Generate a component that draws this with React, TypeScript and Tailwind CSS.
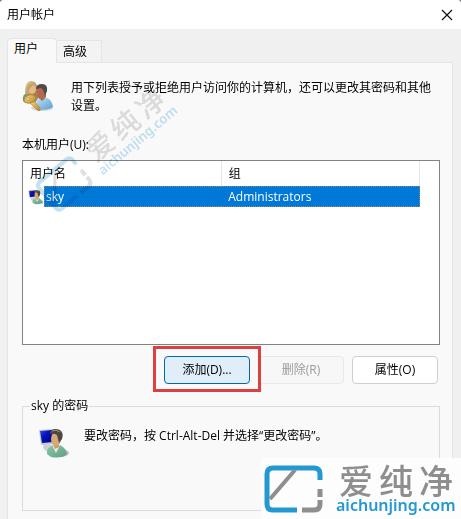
import { useState } from 'react';

function Brand({ className }: { className: string }) {
  return (
    <svg viewBox="0 0 197 58" className={`overflow-visible ${className}`} role="img" aria-label="aichunjing.com">
      <g fill="none" strokeWidth="5">
        <path d="M56 19V13Q56 7 50 7H9Q3 7 3 13V43Q3 49 9 49H33" stroke="#2498d2" />
        <path d="M6 38L31 9" stroke="#8e8e8e" strokeWidth="4" />
        <path d="M56 28V36M56 39V43Q56 49 50 49H38" stroke="#8e8e8e" />
      </g>
      <g className="font-['Noto_Sans_CJK_SC',sans-serif] text-[34px] font-medium" fill="#8e8e8e">
        <text x="75" y="33">爱</text>
        <text x="115" y="33">纯</text>
        <text x="155" y="33">净</text>
      </g>
      <text x="72" y="50" fill="#2498d2" className="font-['Noto_Sans',sans-serif] text-[16px] font-semibold">
        aichunjing.com
      </text>
    </svg>
  );
}

function UsersIcon() {
  return (
    <svg viewBox="0 0 32 32" className="size-8 shrink-0" aria-hidden="true">
      <defs>
        <linearGradient id="hair" x1="0" y1="0" x2="1" y2="1">
          <stop offset="0" stopColor="#e3cf9c" />
          <stop offset="1" stopColor="#95713a" />
        </linearGradient>
        <linearGradient id="shirt" x1="0" y1="0" x2="1" y2="1">
          <stop offset="0" stopColor="#c0e2f8" />
          <stop offset="1" stopColor="#5a9bcc" />
        </linearGradient>
        <linearGradient id="key" x1="0" y1="0" x2="1" y2="1">
          <stop offset="0" stopColor="#f8dd88" />
          <stop offset="1" stopColor="#bd842a" />
        </linearGradient>
      </defs>
      <ellipse cx="20" cy="29" rx="11" ry="3" fill="#b9c0c4" opacity=".6" />
      <path d="M1 22Q0 15 5 14H13L17 18L13 24H5Q2 24 1 22Z" fill="#7b9a6c" />
      <path d="M3 14Q3 2 9 2Q15 2 15 9L14 17Q8 19 3 14Z" fill="url(#hair)" />
      <ellipse cx="10" cy="10" rx="4" ry="5" fill="#e4b98b" />
      <path d="M5 9Q7 3 14 6Q10 6 7 11L6 15Z" fill="#c6a362" />
      <path d="M14 30Q13 21 18 19H25Q30 21 31 28Q27 31 18 31Z" fill="url(#shirt)" />
      <path d="M17 19L20 22L24 18V15H17Z" fill="#a56244" />
      <ellipse cx="19" cy="13" rx="5" ry="7" fill="#b8694d" />
      <path d="M14 10Q14 5 20 5Q26 5 25 12L23 17Q22 11 19 9Z" fill="#4b4b4c" />
      <path d="M11 21L18 29L18 32L15 31L8 24Z" fill="url(#key)" stroke="#b08031" strokeWidth=".6" />
      <ellipse cx="8" cy="20" rx="6" ry="4" transform="rotate(-18 8 20)" fill="url(#key)" stroke="#aa7c30" strokeWidth=".7" />
      <ellipse cx="6" cy="20" rx="2" ry="1" transform="rotate(-18 6 20)" fill="#fff4cb" stroke="#a67b33" strokeWidth=".6" />
    </svg>
  );
}

function AccountIcon({ className }: { className: string }) {
  return (
    <svg viewBox="0 0 32 32" className={className} aria-hidden="true">
      <defs>
        <linearGradient id="screen" x1="0" y1="0" x2="1" y2="1">
          <stop offset="0" stopColor="#3652d9" />
          <stop offset=".4" stopColor="#0510bb" />
          <stop offset="1" stopColor="#000879" />
        </linearGradient>
        <linearGradient id="jacket" x1="0" y1="0" x2="1" y2="1">
          <stop offset="0" stopColor="#8bc7a8" />
          <stop offset="1" stopColor="#5f9f85" />
        </linearGradient>
      </defs>
      <ellipse cx="22" cy="26" rx="9" ry="4" fill="#9fa6aa" opacity=".7" />
      <path d="M6 17L16 18L14 21L8 24L5 21Z" fill="#cbd0d2" />
      <path d="M1 3L16 2L17 17L3 18Z" fill="#bdc9dc" />
      <path d="M2 4L15 3L15 15L4 16Z" fill="url(#screen)" />
      <path d="M9 27Q8 20 15 19L22 18Q28 21 29 27Q24 32 13 30Z" fill="url(#jacket)" />
      <path d="M15 20L18 26L22 18L20 14Z" fill="#e7eee5" />
      <path d="M15 16L21 15L21 20L17 22Z" fill="#ce9565" />
      <ellipse cx="18" cy="12" rx="5" ry="7" fill="#d8a875" />
      <path d="M12 5Q15 0 22 3Q26 6 24 12L21 16L19 8Q16 6 12 7Z" fill="#4b4741" />
      <path d="M14 4Q18 2 22 5" fill="none" stroke="#969080" strokeWidth="1" />
    </svg>
  );
}

export default function App() {
  const [tab, setTab] = useState('users');
  const button = 'h-7 w-[86px] rounded border text-center';

  return (
    <div className="relative min-h-screen bg-[#777] font-['Open_Sans','Noto_Sans_CJK_SC',sans-serif] text-xs leading-[18px] text-black">
      <div className="flex min-h-screen flex-col overflow-hidden rounded-t bg-[#f0f0f0]">
        <header className="flex h-[29px] items-center justify-between bg-white pr-2 pl-[7px]">
          <h1>用户帐户</h1>
          <button type="button" aria-label="关闭" className="flex size-3 items-center justify-center">
            <svg viewBox="0 0 12 12" className="size-3" aria-hidden="true">
              <path d="M1 1L11 11M11 1L1 11" stroke="#111" strokeWidth="1.200" />
            </svg>
          </button>
        </header>

        <main className="flex flex-1 flex-col pt-[9px] pr-2 pl-[7px]">
          <div role="tablist" className="flex items-end">
            <button
              type="button"
              role="tab"
              aria-selected={tab === 'users'}
              onClick={() => setTab('users')}
              className="z-10 -mb-px h-[25px] w-[50px] rounded-t-sm border border-b-0 border-[#e5e5e5] bg-[#f9f9f9] pr-3 pb-1"
            >
              用户
            </button>
            <button
              type="button"
              role="tab"
              aria-selected={tab === 'advanced'}
              onClick={() => setTab('advanced')}
              className="h-[22px] w-[45px] border border-b-0 border-l-0 border-[#e5e5e5] bg-[#f3f3f3] pr-2"
            >
              高级
            </button>
          </div>

          <section role="tabpanel" className="flex-1 border border-b-0 border-[#e5e5e5] bg-[#f9f9f9] pt-4 pr-3 pb-2 pl-[14px]">
            <div className="flex gap-[17px]">
              <UsersIcon />
              <p>用下列表授予或拒绝用户访问你的计算机，还可以更改其密码和其他设置。</p>
            </div>

            <h2 id="users-label" className="mt-[21px] mb-[6px]">本机用户(U):</h2>
            <div className="h-[185px] border border-[#828282] bg-white">
              <table aria-labelledby="users-label" className="w-[397px] max-w-full table-fixed text-left">
                <thead>
                  <tr className="h-[25px]">
                    <th className="border-r border-[#e5e5e5] pl-[7px] font-normal">用户名</th>
                    <th className="border-r border-[#e5e5e5] pl-[7px] font-normal">组</th>
                  </tr>
                </thead>
                <tbody>
                  <tr className="h-[21px] text-white">
                    <td className="p-0">
                      <div className="flex h-[21px] items-center pl-[5px]">
                        <AccountIcon className="size-4 shrink-0" />
                        <span className="flex h-[21px] flex-1 items-center border border-r-0 border-dotted border-[#8f8a78] bg-[#0078d7] pl-px">sky</span>
                      </div>
                    </td>
                    <td className="p-0">
                      <div className="flex h-[21px] items-center border border-l-0 border-dotted border-[#8f8a78] bg-[#0078d7] pl-[7px]">Administrators</div>
                    </td>
                  </tr>
                </tbody>
              </table>
            </div>

            <div className="mt-[11px] mr-[2px] flex justify-end gap-2">
              <div className="relative">
                <button type="button" className={`${button} border-[#0067b0] bg-[#e0eef9]`}>添加(D)...</button>
                <span className="pointer-events-none absolute -inset-x-[11px] -top-[10px] -bottom-2 border-3 border-[#dc4040]" />
              </div>
              <button type="button" disabled className={`${button} border-[#e9e9e9] bg-[#f7f7f7] text-[#9b9b9b]`}>删除(R)</button>
              <button type="button" className={`${button} border-[#cfcfcf] bg-white`}>属性(O)</button>
            </div>

            <fieldset className="mt-[13px] h-[114px] border border-[#dcdcdc] px-[15px]">
              <legend className="-ml-2 px-px">sky 的密码</legend>
              <div className="mt-3 flex gap-[14px]">
                <AccountIcon className="size-8 shrink-0" />
                <p>要改密码，按 Ctrl-Alt-Del 并选择“更改密码”。</p>
              </div>
            </fieldset>
          </section>
        </main>
      </div>

      <div className="pointer-events-none absolute top-[124px] left-[26px] -rotate-40 opacity-28 mix-blend-multiply">
        <Brand className="h-12 w-[165px]" />
      </div>
      <div className="absolute right-0 bottom-0 bg-[#fdfdfd] pt-[3px] pl-[3px]">
        <Brand className="h-[58px] w-[197px]" />
      </div>
    </div>
  );
}
